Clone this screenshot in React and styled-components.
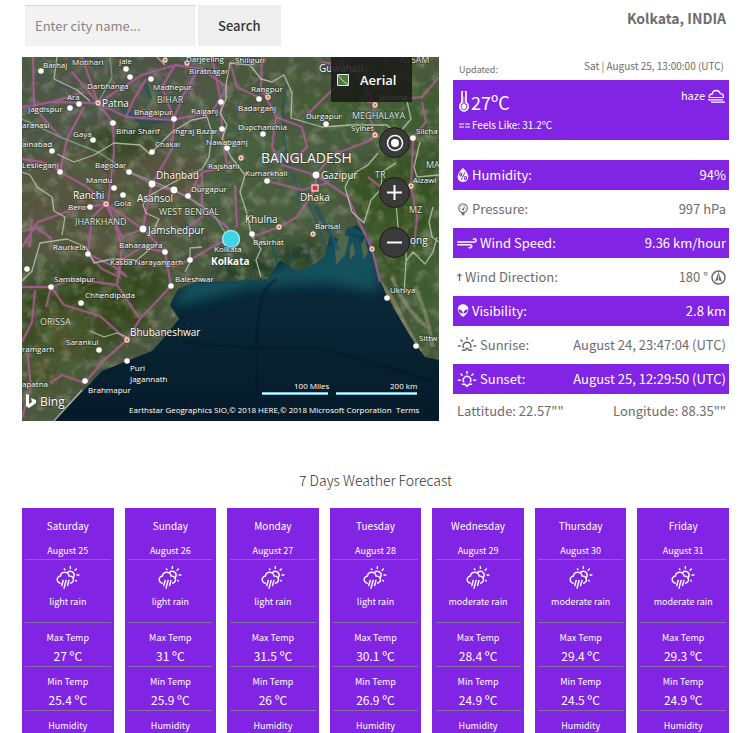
import React from "react";
import styled, { createGlobalStyle } from "styled-components";
import {
  WiThermometer,
  WiDayRain,
  WiHumidity,
  WiBarometer,
  WiStrongWind,
  WiAlien,
  WiSunrise,
  WiSunset,
} from "react-icons/wi";

const PURPLE = "#8224e3";

const GlobalStyle = createGlobalStyle`
  *, *::before, *::after { box-sizing: border-box; }
  body {
    margin: 0;
    background: #fff;
    color: #6d6d6d;
    font-family: "Noto Sans CJK SC", "Noto Sans", sans-serif;
    font-size: 13px;
    line-height: 20px;
  }
  h1, h2, h3, p { margin: 0; font-weight: inherit; font-size: inherit; }
  svg { display: block; flex: none; }
`;

const Page = styled.div`
  padding: 5px 10px 0 22px;
`;

const Header = styled.header`
  display: flex;
  justify-content: space-between;
  align-items: flex-start;
  padding: 0 3px 0 3px;
`;

const SearchForm = styled.form`
  display: flex;
  gap: 3px;
`;

const SearchInput = styled.input`
  width: 170px;
  height: 41px;
  padding: 0 10px;
  border: 0;
  border-radius: 0;
  background: #f2f2f2;
  box-shadow: inset 0 1px 1px rgba(0, 0, 0, 0.125);
  color: #43454b;
  font: inherit;
  font-size: 13px;
  &::placeholder { color: #858585; opacity: 1; }
`;

const SearchButton = styled.button`
  height: 41px;
  padding: 0 20px;
  border: 0;
  background: #eee;
  color: #333;
  font: inherit;
  font-size: 13px;
  font-weight: 500;
`;

const Place = styled.h1`
  padding-top: 3px;
  font-size: 14px;
  font-weight: 700;
`;

const Overview = styled.main`
  display: grid;
  grid-template-columns: 417fr 276fr;
  gap: 14px;
  align-items: start;
  margin-top: 11px;
`;

const MapFrame = styled.section`
  position: relative;
  overflow: hidden;
  background: #071f30;
`;

const MapDrawing = styled.svg`
  width: 100%;
  height: auto;
`;

const MapType = styled.button`
  position: absolute;
  top: 0;
  right: 27px;
  display: flex;
  align-items: center;
  gap: 11px;
  width: 81px;
  height: 45px;
  padding: 0 0 0 6px;
  border: 0;
  background: rgba(24, 24, 22, 0.84);
  color: #fff;
  font: 13px "Open Sans", sans-serif;
  font-weight: 600;
`;

const MapControls = styled.div`
  position: absolute;
  top: 70px;
  right: 29px;
  display: grid;
  gap: 19px;
`;

const RoundButton = styled.button`
  display: grid;
  place-items: center;
  width: 31px;
  height: 31px;
  padding: 0;
  border: 1px solid #1c1c1c;
  border-radius: 50%;
  background: #3b3a3b;
`;

const Side = styled.section`
  min-width: 0;
`;

const UpdatedLine = styled.div`
  display: flex;
  justify-content: space-between;
  height: 23px;
  padding: 0 5px 0 6px;
  font-size: 9px;
  line-height: 17px;
`;

const UpdatedLabel = styled.span`
  padding-top: 4px;
`;

const UpdatedTime = styled.time`
  font-size: 10px;
`;

const Summary = styled.div`
  display: flex;
  justify-content: space-between;
  height: 60px;
  margin-bottom: 20px;
  padding: 6px 4px 0 6px;
  background: ${PURPLE};
  color: #fff;
`;

const Temperature = styled.p`
  display: flex;
  align-items: center;
  gap: 2px;
  height: 32px;
  font-size: 18px;
`;

const Feels = styled.p`
  display: flex;
  align-items: center;
  gap: 2px;
  font-size: 10px;
  line-height: 14px;
`;

const Condition = styled.p`
  display: flex;
  gap: 3px;
  font-size: 11px;
  line-height: 18px;
`;

const Row = styled.div`
  display: flex;
  align-items: center;
  justify-content: space-between;
  height: ${(p) => (p.$filled ? 30 : 38)}px;
  padding: 0 3px 0 4px;
  background: ${(p) => (p.$filled ? PURPLE : "transparent")};
  color: ${(p) => (p.$filled ? "#fff" : "inherit")};
  white-space: nowrap;
`;

const Coordinates = styled(Row)`
  height: 34px;
`;

const RowPart = styled.span`
  display: flex;
  align-items: center;
  gap: 3px;
`;

const Glyph = styled.span`
  display: block;
  flex: none;
  width: ${(p) => p.$w}px;
  height: ${(p) => p.$h}px;
  svg { width: 100%; height: 100%; }
`;

const ForecastTitle = styled.h2`
  margin: 40px 0 16px;
  font-size: 14px;
  font-weight: 300;
  line-height: 24px;
  color: #333;
  text-align: center;
`;

const Days = styled.section`
  display: grid;
  grid-template-columns: repeat(7, 1fr);
  gap: 11px;
`;

const DayCard = styled.article`
  padding: 10px 3px 0;
  background: ${PURPLE};
  color: #fff;
  font-size: 9px;
  line-height: 16px;
  text-align: center;
`;

const DayName = styled.h3`
  font-size: 10px;
  margin-bottom: 9px;
`;

const DaySky = styled.div`
  display: grid;
  justify-items: center;
  align-content: start;
  gap: 4px;
  height: 63px;
  padding-top: 6px;
  border-top: 1px solid #80719b;
`;

const DayMetric = styled.div`
  height: ${(p) => (p.$last ? 23 : 44)}px;
  padding-top: 7px;
  border-top: 1px solid #80719b;
`;

const DayValue = styled.p`
  font-size: 12px;
  line-height: 20px;
`;

const W = "#fff";

const places = [
  ["Barhaj", 21, 11], ["Motihari", 50, 8], ["Jale", 97, 7], ["Darjeeling", 164, 5],
  ["Biratnagar", 167, 17], ["Darbhanga", 65, 32], ["Madhepur", 131, 33], ["Ara", 45, 43],
  ["Jagdispur", 6, 55], ["Bhagalpur", 112, 58], ["Raiganj", 169, 57], ["aranasi", 0, 71],
  ["Gaya", 51, 80], ["Bihar Sharif", 94, 77], ["Ingraj Bazar", 151, 77], ["Nawabganj", 184, 88],
  ["ainabad", 0, 90], ["Chakai", 133, 90], ["Leslieganj", 0, 111], ["Bagodar", 73, 111],
  ["Rajshahi", 186, 112], ["Mandu", 64, 126], ["Durgapur", 169, 135], ["Gola", 92, 149],
  ["Bero", 46, 153], ["Shiliguri", 213, 6], ["Rangpur", 229, 35], ["Badarganj", 216, 54],
  ["Shillong", 356, 43], ["Durgapur", 284, 62], ["Dupchanchia", 216, 73], ["Sylhet", 329, 74],
  ["Silcha", 394, 77], ["Kumarkhali", 223, 119], ["Aizawl", 391, 126], ["Barisal", 293, 172],
  ["Raurkela", 31, 193], ["Baharagora", 97, 191], ["Kasba Narayangarh", 88, 208],
  ["Sambalpur", 32, 225], ["Baleshwar", 153, 225], ["Chhendipada", 63, 241],
  ["Sarankul", 44, 288], ["ramgarh", 0, 295], ["Puri", 108, 314], ["Jagannath", 108, 325],
  ["apatna", 0, 330], ["Brahmapur", 66, 336], ["Basirhat", 231, 188],
  ["Ukhiya", 368, 236], ["Sittw", 397, 284], ["Kolkata", 192, 195],
];
const cities = [
  ["Patna", 80, 50], ["Dhanbad", 134, 122], ["Ranchi", 51, 142], ["Asansol", 115, 145],
  ["Jamshedpur", 126, 177], ["Guwahati", 297, 15], ["Gazipur", 299, 122],
  ["Dhaka", 278, 144], ["Khulna", 223, 166], ["Bhubaneshwar", 108, 279], ["ong", 388, 187],
];
const states = [
  ["BIHAR", 135, 46], ["WEST BENGAL", 137, 158], ["JHARKHAND", 53, 168], ["ORISSA", 18, 268],
  ["MEGHALAYA", 330, 62], ["ASSAM", 378, 6], ["TR", 353, 121], ["MA", 404, 111], ["MZ", 387, 156],
];
const dots = [
  [19, 14], [104, 12], [108, 20], [129, 22], [57, 47], [48, 51], [91, 66], [152, 62], [199, 45],
  [200, 72], [71, 83], [205, 91], [130, 95], [30, 94], [38, 115], [107, 115], [92, 131], [101, 138],
  [68, 150], [166, 139], [237, 42], [241, 77], [304, 67], [391, 81], [245, 124], [230, 177],
  [66, 197], [143, 195], [168, 203], [5, 212], [29, 230], [149, 229], [59, 246], [77, 293],
  [105, 304], [63, 324], [365, 241], [394, 289],
];
const bigDots = [[130, 127], [152, 133], [121, 172], [294, 118]];
const ringDots = [
  [76, 46], [84, 147], [143, 3], [165, 6], [246, 40], [353, 48], [353, 78], [219, 101],
  [257, 170], [291, 177], [105, 283], [350, 192], [389, 129],
];

const roads =
  "M0 50L30 45 76 46 104 60 150 63 190 55 205 30 180 12 153 8 120 18 76 46 50 15 M11 0L12 50 38 80 M76 46L60 0 M30 45L63 35 M62 50L45 82 38 115 65 130 84 147 121 172 143 195 149 229 118 262 105 283 80 305 63 326 40 318 28 326 M76 46L91 66 92 95 86 147 100 190 97 220 80 212 66 197 70 160 84 147 52 152 16 165 0 190 M107 115L130 127 166 139 205 170 208 181 M152 62L150 92 130 127 125 150 121 172 M200 72L199 45 190 0 M200 72L205 110 180 115 166 139 M10 162L8 190 M0 230L29 230 52 222 95 228 118 262 M29 230L42 248 78 259 105 283 M29 230L24 250 M13 233L10 265 0 285 M105 220L93 210 66 197 M5 292L9 330 0 360 M95 227L100 190 M240 0L239 30 254 60 250 90 260 108 294 118 294 131 275 160 257 170 230 180 M294 118L310 98 347 84 353 78 348 60 353 48 333 12 300 5 M294 118L326 140 337 165 350 192 358 225 M353 78L372 85 391 81 390 110 389 129 365 135 346 120 M240 42L215 30 208 5 M245 124L280 133 305 126 M254 60L280 70 285 90 270 105 M213 128L215 170 M345 45L400 40 417 20 M391 81L404 65 400 45 M389 129L395 160 392 190 M333 12L305 38 285 58 M180 115L180 160 166 170 M40 115L20 105 0 102 M143 195L120 190 96 205 M104 60L112 42 124 22 M153 8L140 30 152 62 M177 12L160 40 152 62 M0 175L14 170 30 182 M121 172L100 180 84 147 M168 203L190 190 208 181 M168 203L150 210";
const greenRoads = "M0 62L38 80 76 95 107 115 152 133 190 155 205 178 M88 0L90 20 76 46";
const borders =
  "M35 0L32 22 55 33 68 44 M0 115L8 118 15 130 30 140 32 154 43 160 40 178 M35 97L52 105 72 98 92 86 118 88 128 97 150 75 170 63 185 60 190 76 187 100 180 112 152 125 125 140 121 148 124 156 137 162 133 170 M180 190L168 191 168 205 163 215 M135 186L115 203 90 202 72 206 64 190 45 182 18 186 10 214 0 224 M204 28L208 6 228 8 239 22 250 25 262 18 270 36 269 61 300 70 329 68 365 68 376 78 380 92 M204 28L204 42 198 56 205 68 200 82 209 100 223 118 218 135 225 157 229 178 239 192 234 203 239 220 M323 130L330 155 342 166 349 143 359 132 360 115 374 106 M323 130L329 118 346 108 356 96 M374 145L376 170 384 185 384 204 382 237 M384 204L391 195 403 207 411 195 415 180 M384 40L389 62 378 75 M398 85L392 110 395 120 417 118 M417 185L410 180 407 165 411 150 M68 274L82 280 95 276 105 280 M32 364L60 333 M135 0L143 8";

const Compass = () => (
  <svg width="15" height="15" viewBox="0 0 30 30" aria-hidden="true">
    <circle cx="15" cy="15" r="13" fill="none" stroke="currentColor" strokeWidth="3" />
    <path d="M15 4l7 19-7-3-7 3z" fill="currentColor" />
    <path d="M15 10v10" stroke="#fff" strokeWidth="1.4" />
  </svg>
);

const Dashes = () => (
  <svg width="11" height="5" viewBox="0 0 11 5" aria-hidden="true">
    <path d="M0 1h5M6 1h5M0 4h5M6 4h5" stroke="currentColor" strokeWidth="1" />
  </svg>
);

const Haze = () => (
  <svg width="17" height="18" viewBox="0 0 17 18" fill="none" stroke="currentColor" aria-hidden="true">
    <path d="M1 11.500C.8 9 2.500 7.900 4.200 8 4.600 5.600 6.400 4.500 8.200 4.500c2 0 3.500 1.200 4 3.200 2.200 0 3.300 1.500 3.300 3.300" strokeWidth="1.300" />
    <path d="M1 11.500h15M0 13.800h15M3 16.200h14" strokeWidth="1.200" />
  </svg>
);

const ArrowUp = () => (
  <svg width="5" height="8" viewBox="0 0 5 8" fill="none" stroke="currentColor" aria-hidden="true">
    <path d="M2.500 8V1" strokeWidth="1.300" />
    <path d="M.4 3.200l2.100-2.200 2.100 2.200" strokeWidth="1.200" />
  </svg>
);

function MapView() {
  return (
    <MapFrame aria-label="Map of Kolkata">
      <MapDrawing viewBox="0 0 417 364" fontFamily="'Open Sans', sans-serif">
        <defs>
          <filter id="soft" x="-20%" y="-20%" width="140%" height="140%">
            <feGaussianBlur stdDeviation="8" />
          </filter>
          <filter id="glow" x="-20%" y="-20%" width="140%" height="140%">
            <feGaussianBlur stdDeviation="6" />
          </filter>
          <filter id="terrain" x="0" y="0" width="100%" height="100%">
            <feTurbulence type="fractalNoise" baseFrequency="0.05" numOctaves="5" seed="8" />
            <feColorMatrix values="0 0 0 0 0.07  0 0 0 0 0.14  0 0 0 0 0.05  2.4 0 0 0 -1" />
          </filter>
          <filter id="fields" x="0" y="0" width="100%" height="100%">
            <feTurbulence type="fractalNoise" baseFrequency="0.08" numOctaves="4" seed="21" />
            <feColorMatrix values="0 0 0 0 0.6  0 0 0 0 0.6  0 0 0 0 0.46  0 2.2 0 0 -1.05" />
          </filter>
          <clipPath id="land">
            <path d="M0 0H417V303L403 300 392 285 378 262 365 240 358 222 352 198 346 180 335 168 325 172 320 184 308 178 302 200 288 210 274 213 258 203 245 222 208 224 177 224 156 232 148 248 157 262 140 283 130 294 105 304 80 314 62 333 32 364H0Z" />
          </clipPath>
          <linearGradient id="sea" x1="0" y1="0" x2="0" y2="1">
            <stop offset="0" stopColor="#0d3c4a" />
            <stop offset="0.35" stopColor="#0a2939" />
            <stop offset="1" stopColor="#051a2a" />
          </linearGradient>
        </defs>
        <rect y="160" width="417" height="204" fill="url(#sea)" />
        <path d="M165 222L245 215 300 195 325 170 355 195 357 235 300 226 230 230 190 240 150 250Z" fill="#165560" opacity=".9" filter="url(#glow)" />
        <path d="M255 222q-16 10 -17 30q-6 30 -2 85M160 285q80 8 110 5t140 35" fill="none" stroke="#031523" strokeWidth="3" opacity=".35" />
        <g clipPath="url(#land)">
          <rect width="417" height="364" fill="#4b563f" />
          <g filter="url(#soft)">
            <path d="M0 0H190V60L100 90 0 100Z" fill="#4f544a" />
            <path d="M0 110L90 80 180 95 150 200 0 200Z" fill="#57553f" />
            <path d="M60 75l70-15 10 30-60 20z" fill="#344628" />
            <path d="M0 230L60 200 150 215 130 260 60 310 0 300Z" fill="#34461f" />
            <path d="M20 250L80 260 50 330 0 340Z" fill="#485329" />
            <path d="M190 60L330 70 320 180 220 200 170 150Z" fill="#4a5b41" />
            <path d="M185 210L300 180 290 215 200 225Z" fill="#233e26" />
            <path d="M320 110L417 90V230L370 240 345 180Z" fill="#375222" />
            <path d="M270 30L417 20V100L290 70Z" fill="#405c32" />
            <path d="M380 200l37-10v110l-20-5z" fill="#3e5b30" />
          </g>
          <rect width="417" height="364" filter="url(#terrain)" opacity=".6" />
          <rect width="417" height="364" filter="url(#fields)" opacity=".38" />
          <path d="M358 225l12 16 14 28 15 26M370 220q12 32 35 50M393 230q12 25 18 60" fill="none" stroke="#9a9a7c" strokeWidth="4" opacity=".5" />
        </g>
        <path d="M313 188l7-12 7 4-4 18-9 10zM328 190l3-5 2 12-5 6zM339 188l4-8 3 15-4 8z" fill="#56684d" opacity=".9" />
        <g fill="none" stroke="#1d5361" strokeLinecap="round">
          <path d="M264 28q-8 40 4 80t14 34 14 28 10 20" strokeWidth="2.5" opacity=".55" />
          <path d="M294 150l10 20 12 22M328 172l12 5M124 28l4 12M100 52l20 14 30-3" strokeWidth="4" opacity=".7" />
          <path d="M250 190l5 15M270 188l-2 18M285 188l4 14" strokeWidth="1.5" />
        </g>
        <path d={roads} fill="none" stroke="#b45c9d" strokeWidth="4" strokeLinejoin="round" opacity=".16" />
        <path d={roads} fill="none" stroke="#b45c9d" strokeWidth="1.8" strokeLinejoin="round" opacity=".8" />
        <path d={greenRoads} fill="none" stroke="#7fae92" strokeWidth="1.4" opacity=".75" />
        <path d={borders} fill="none" stroke="#cbd1c0" strokeWidth="1.3" strokeLinejoin="round" opacity=".75" />
        {dots.map(([x, y]) => <circle key={`${x}-${y}`} cx={x} cy={y} r="2.8" fill={W} />)}
        {bigDots.map(([x, y]) => <circle key={`${x}-${y}`} cx={x} cy={y} r="3.4" fill={W} />)}
        {ringDots.map(([x, y]) => <circle key={`${x}-${y}`} cx={x} cy={y} r="2" fill="#d5764f" stroke="#f5dcc8" strokeWidth="1.3" />)}
        <rect x="290" y="128" width="6" height="6" fill="#e22d35" stroke={W} />
        <circle cx="209" cy="182" r="8.5" fill="#3fd3e5" stroke="#9be9ef" strokeWidth="1.5" />
        <g fill="#fff" stroke="#1c251c" strokeWidth="1.4" strokeOpacity=".5" paintOrder="stroke">
          {places.map(([t, x, y]) => <text key={`${t}${x}`} x={x} y={y} fontSize="8">{t}</text>)}
          {cities.map(([t, x, y]) => <text key={t} x={x} y={y} fontSize="10">{t}</text>)}
          {states.map(([t, x, y]) => <text key={t} x={x} y={y} fontSize="9" fill="#dfe3da">{t}</text>)}
          <text x="239" y="106" fontSize="14">BANGLADESH</text>
          <text x="189" y="208" fontSize="10" fontWeight="700">Kolkata</text>
          <text x="18" y="349" fontSize="12">Bing</text>
          <text x="272" y="332" fontSize="8">100 Miles</text>
          <text x="368" y="332" fontSize="8">200 km</text>
          <text x="107" y="356" fontSize="8">Earthstar Geographics SIO,© 2018 HERE,© 2018 Microsoft Corporation</text>
          <text x="374" y="356" fontSize="8">Terms</text>
        </g>
        <path d="M4 337l3 1v9l3-2-1-4 5 2v3l-7 5-3-2z" fill="#fff" />
        <path d="M240 336.500h66M314 336.500h81" stroke="#4fa4c8" strokeWidth="3" />
        <path d="M240 336.500h66M314 336.500h81" stroke="#fff" strokeWidth="1.500" />
      </MapDrawing>
      <MapType type="button">
        <svg width="12" height="12" viewBox="0 0 12 12" aria-hidden="true">
          <path d="M.5.5h11v11H.5z" fill="#4f7a3e" stroke="#e4eadf" />
          <path d="M1 1q3 5 10 10" fill="none" stroke="#c9dcc0" />
        </svg>
        Aerial
      </MapType>
      <MapControls>
        <RoundButton type="button" aria-label="Locate me">
          <svg width="18" height="18" viewBox="0 0 18 18"><circle cx="9" cy="9" r="7.500" fill="none" stroke="#fff" strokeWidth="1.500" /><circle cx="9" cy="9" r="4" fill="#fff" /></svg>
        </RoundButton>
        <RoundButton type="button" aria-label="Zoom in">
          <svg width="17" height="17" viewBox="0 0 17 17"><path d="M8.500 1v15M1 8.500h15" stroke="#fff" strokeWidth="2" /></svg>
        </RoundButton>
        <RoundButton type="button" aria-label="Zoom out">
          <svg width="17" height="17" viewBox="0 0 17 17"><path d="M1 8.500h15" stroke="#fff" strokeWidth="2" /></svg>
        </RoundButton>
      </MapControls>
    </MapFrame>
  );
}

const readings = [
  { label: "Humidity:", value: "94%", icon: <Glyph $w={12} $h={16}><WiHumidity viewBox="7 4 16 22" /></Glyph> },
  { label: "Pressure:", value: "997 hPa", icon: <Glyph $w={12} $h={15}><WiBarometer viewBox="6 4 18 22" /></Glyph> },
  { label: "Wind Speed:", value: "9.36 km/hour", icon: <Glyph $w={20} $h={12}><WiStrongWind viewBox="3 8 24 14" /></Glyph> },
  { label: "Wind Direction:", value: "180 °", icon: <ArrowUp />, after: <Compass /> },
  { label: "Visibility:", value: "2.8 km", icon: <Glyph $w={12} $h={14}><WiAlien viewBox="7 6 16 18" /></Glyph> },
  { label: "Sunrise:", value: "August 24, 23:47:04 (UTC)", icon: <Glyph $w={20} $h={16}><WiSunrise viewBox="2 4 26 20" /></Glyph> },
  { label: "Sunset:", value: "August 25, 12:29:50 (UTC)", icon: <Glyph $w={20} $h={16}><WiSunset viewBox="2 4 26 20" /></Glyph> },
];

const days = [
  ["Saturday", "August 25", "light rain", "27", "25.4"],
  ["Sunday", "August 26", "light rain", "31", "25.9"],
  ["Monday", "August 27", "light rain", "31.5", "26"],
  ["Tuesday", "August 28", "light rain", "30.1", "26.9"],
  ["Wednesday", "August 29", "moderate rain", "28.4", "24.9"],
  ["Thursday", "August 30", "moderate rain", "29.4", "24.5"],
  ["Friday", "August 31", "moderate rain", "29.3", "24.9"],
];

export default function App() {
  return (
    <>
      <GlobalStyle />
      <Page>
        <Header>
          <SearchForm onSubmit={(e) => e.preventDefault()}>
            <SearchInput type="text" placeholder="Enter city name..." aria-label="City name" />
            <SearchButton type="submit">Search</SearchButton>
          </SearchForm>
          <Place>Kolkata, INDIA</Place>
        </Header>
        <Overview>
          <MapView />
          <Side>
            <UpdatedLine>
              <UpdatedLabel>Updated:</UpdatedLabel>
              <UpdatedTime>Sat | August 25, 13:00:00 (UTC)</UpdatedTime>
            </UpdatedLine>
            <Summary>
              <div>
                <Temperature>
                  <Glyph $w={10} $h={22}><WiThermometer viewBox="10 4 10 22" /></Glyph>
                  27ºC
                </Temperature>
                <Feels><Dashes />Feels Like: 31.2ºC</Feels>
              </div>
              <Condition>
                haze
                <Haze />
              </Condition>
            </Summary>
            {readings.map((r, i) => (
              <Row key={r.label} $filled={i % 2 === 0}>
                <RowPart>{r.icon}{r.label}</RowPart>
                <RowPart>{r.value}{r.after}</RowPart>
              </Row>
            ))}
            <Coordinates>
              <span>Lattitude: 22.57""</span>
              <span>Longitude: 88.35""</span>
            </Coordinates>
          </Side>
        </Overview>
        <ForecastTitle>7 Days Weather Forecast</ForecastTitle>
        <Days>
          {days.map(([name, date, sky, max, min]) => (
            <DayCard key={name}>
              <DayName>{name}</DayName>
              <p>{date}</p>
              <DaySky>
                <Glyph $w={24} $h={24}><WiDayRain viewBox="1 2 28 26" /></Glyph>
                <p>{sky}</p>
              </DaySky>
              <DayMetric><p>Max Temp</p><DayValue>{max} ºC</DayValue></DayMetric>
              <DayMetric><p>Min Temp</p><DayValue>{min} ºC</DayValue></DayMetric>
              <DayMetric $last><p>Humidity</p></DayMetric>
            </DayCard>
          ))}
        </Days>
      </Page>
    </>
  );
}
